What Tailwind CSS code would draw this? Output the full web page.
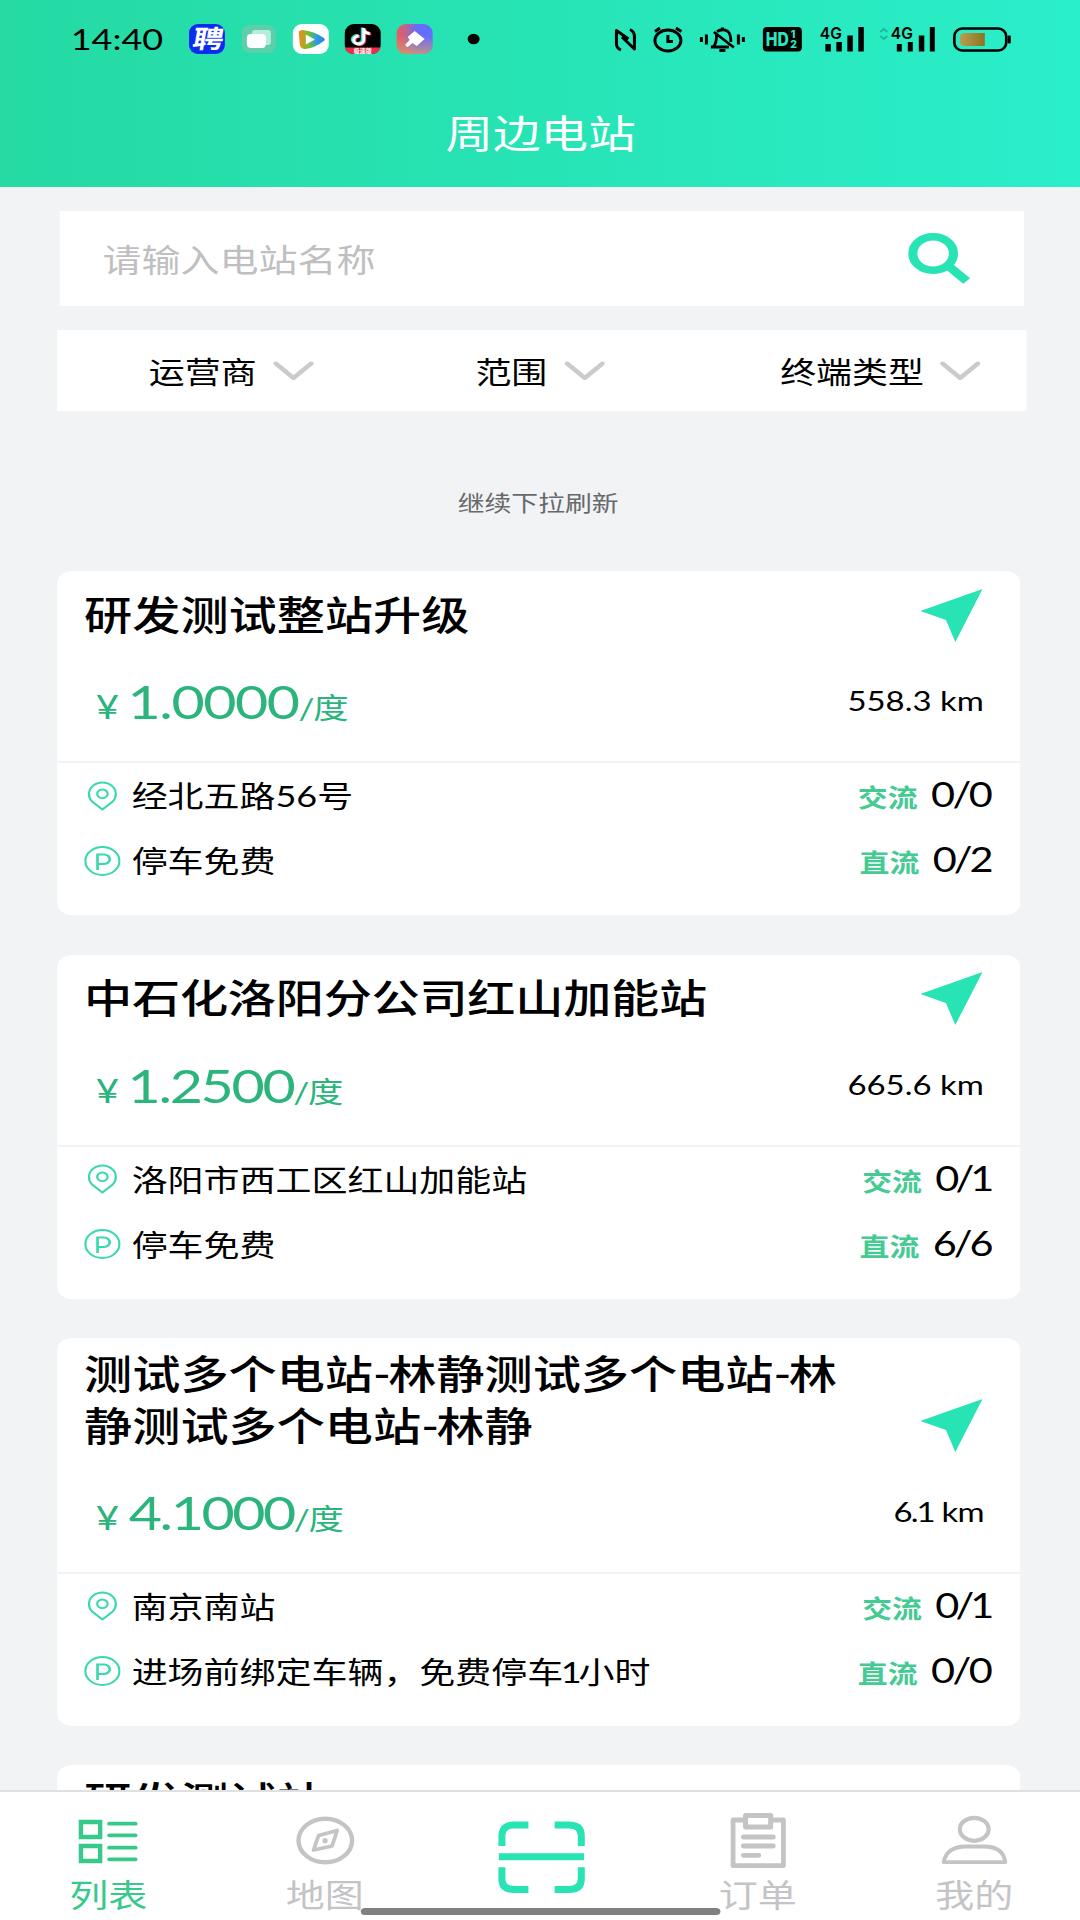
<!DOCTYPE html>
<html lang="zh-CN">
<head>
<meta charset="utf-8">
<title>周边电站</title>
<script src="https://cdn.jsdelivr.net/npm/@tailwindcss/browser@4"></script>
</head>
<body class="w-[1080px] h-[1920px] overflow-hidden bg-[#f1f3f5]">
<svg class="hidden">
  <symbol id="chev" viewBox="0 0 33 20"><path d="M2 2.5 L16.5 17 L31 2.5" fill="none" stroke="#cbcbcb" stroke-width="4" stroke-linecap="round" stroke-linejoin="round"/></symbol>
  <symbol id="nav" viewBox="0 0 51 53"><path d="M51 0 L0 22 L21 31 L28.7 53 Z" fill="#28e3b4"/></symbol>
  <symbol id="pin" viewBox="0 0 30 30"><path d="M15 28.500 L6.500 20.500 A12 12 0 0 1 4 12.700 A11 11.200 0 0 1 26 12.700 A12 12 0 0 1 23.500 20.500 Z" fill="none" stroke="#3ad8af" stroke-width="1.8" stroke-linejoin="round"/><circle cx="15" cy="12.800" r="4.300" fill="none" stroke="#3ad8af" stroke-width="1.8"/></symbol>
  <symbol id="park" viewBox="0 0 30 30"><circle cx="15" cy="15" r="14" fill="none" stroke="#3ad8af" stroke-width="1.8"/><path d="M11 24 V8.500 H16.500 A4.500 4.700 0 0 1 16.500 18 H11" fill="none" stroke="#3ad8af" stroke-width="2.2"/></symbol>
</svg>
<!-- Narrow canvas widened to the full viewport -->
<div class="relative w-[886px] h-[1920px] origin-top-left scale-x-[1.219] flex flex-col overflow-hidden bg-[#f1f3f5] text-black font-['Lato','Noto_Sans_CJK_SC',sans-serif]">

  <header class="h-[187px] shrink-0 bg-linear-to-r from-[#25daa3] via-[#27e4b5] to-[#2aefcb]">
    <div class="h-[78px] flex items-center pl-[58px] pr-[56px]">
      <span class="w-[97px] text-[29.5px] leading-[30px]">14:40</span>
      <svg class="w-[245px] h-[30px]" viewBox="0 0 299 30" preserveAspectRatio="none">
        <defs>
          <linearGradient id="g1" x1="0" y1="0" x2="1" y2="0"><stop offset="0" stop-color="#ee5a5e"/><stop offset=".25" stop-color="#c0648c"/><stop offset=".55" stop-color="#6a6cf5"/><stop offset="1" stop-color="#5f6eff"/></linearGradient>
          <linearGradient id="g2" x1="0" y1="0" x2="0" y2="1"><stop offset=".4" stop-color="#d89a6a" stop-opacity="0"/><stop offset="1" stop-color="#dd9a68"/></linearGradient>
          <linearGradient id="g3" x1="0" y1="0" x2="1" y2="0"><stop offset="0" stop-color="#f58a1e"/><stop offset=".4" stop-color="#6cc12c"/><stop offset=".7" stop-color="#2a9be8"/><stop offset="1" stop-color="#2a7fe0"/></linearGradient>
        </defs>
        <rect x="0" y="0" width="36" height="30" rx="9" fill="#0a2bf0"/>
        <text x="18" y="24" font-size="25" font-weight="700" text-anchor="middle" fill="#fff" transform="translate(4 0) skewX(-10)" textLength="31" lengthAdjust="spacingAndGlyphs">聘</text>
        <rect x="53" y="1" width="34" height="28" rx="8" fill="#5fcfab"/>
        <rect x="63" y="6" width="19" height="15" rx="3" fill="#b4eeda"/>
        <rect x="58" y="10" width="19" height="14" rx="4" fill="#fff"/>
        <rect x="104" y="0" width="36" height="30" rx="9" fill="#fff"/>
        <path d="M110 9 Q110 6 114 6 Q125 7 135 14 Q137 15.500 135 17 Q126 24 116 25 Q112 25 111 21 Z" fill="url(#g3)"/><path d="M117 10.500 L126 15.500 L117 20.500 Z" fill="#fff"/>
        <rect x="156" y="0" width="36" height="30" rx="9" fill="#000"/>
        <path d="M156 23.500 H192 Q190 30 183 30 H165 Q157 30 156 23.500" fill="#e8304c"/>
        <text x="174" y="29" font-size="6" font-weight="700" text-anchor="middle" fill="#fff">极速版</text>
        <g fill="none" stroke-width="3"><path d="M174.500 4 V16 A5 4 0 1 1 170 12 M174.500 5 Q176 9.500 181 9.500" stroke="#29e0dc" transform="translate(-1 -.5)"/><path d="M174.500 4 V16 A5 4 0 1 1 170 12 M174.500 5 Q176 9.500 181 9.500" stroke="#f0365c" transform="translate(1.500 .5)"/><path d="M175 4 V16 A5 4 0 1 1 170 12 M175 5 Q176 9.500 181 9.500" stroke="#fff"/></g>
        <rect x="208" y="0" width="36" height="30" rx="9" fill="url(#g1)"/><rect x="208" y="0" width="36" height="30" rx="9" fill="url(#g2)" opacity=".8"/>
        <path d="M226 7 L236 15 L228 22 L224 19 L219 23 Q216 22 217 20 L221 16 L219 13 Z" fill="#fff"/>
        <ellipse cx="285" cy="15" rx="6" ry="5.200"/>
      </svg>
      <svg class="ml-auto w-[328px] h-[30px]" viewBox="612 24 400 30" preserveAspectRatio="none" font-family="Inter, sans-serif" font-weight="600">
        <g fill="none" stroke="#000" stroke-width="3">
          <path d="M621 50 Q616.500 48 616.500 44 V30.500 L628.500 39 M622 37 L634.500 49 V36.500 Q634.500 31.500 630 29.500" stroke-linejoin="round"/>
          <ellipse cx="668" cy="40.500" rx="13" ry="10.500"/><path d="M668 35 V41.500 H673 M655 31.500 L660 28 M676 28 L681.500 31.500"/>
          <path d="M701.500 37 V42 M706.500 34.500 V44.500 M738.500 34.500 V44.500 M743.500 37 V42"/>
          <path d="M711 47 H729 M713.500 46.500 Q717 43 716.500 35 M714 32 L734 47.500 M717 31.500 Q723 28 728 31.500 Q731 34 731 42" stroke-width="2.800"/><path d="M722.500 27.500 V30 M719.500 50.500 H725.500"/>
          <rect x="954.500" y="28.500" width="52" height="22" rx="8" stroke-width="2.700"/>
        </g>
        <rect x="763" y="27" width="39" height="24.500" rx="4"/>
        <text y="46.500" font-size="19" font-weight="800" fill="#2be7c0"><tspan x="766" textLength="23" lengthAdjust="spacingAndGlyphs">HD</tspan></text>
        <text font-size="10.500" font-weight="800" fill="#2be7c0"><tspan x="791" y="38">1</tspan><tspan x="790.500" y="48.500">2</tspan></text>
        <text x="820" y="39" font-size="16" textLength="22" lengthAdjust="spacingAndGlyphs">4G</text>
        <path d="M825.500 44 h5.500 v7.500 h-5.500z M836.500 42 h5.500 v9.500 h-5.500z M847.500 35.500 h5.500 v16 h-5.500z M858.500 27 h5.500 v24.500 h-5.500z"/>
        <path d="M880.500 32 L884 29 L887.500 32 M880.500 36 L884 39 L887.500 36" fill="none" stroke="#1db894" stroke-width="2"/>
        <text x="891" y="39" font-size="16" textLength="22" lengthAdjust="spacingAndGlyphs">4G</text>
        <path d="M897 44 h5 v7.500 h-5z M908 42 h5 v9.500 h-5z M919 35.500 h5.500 v16 h-5.500z M930 27 h5 v24.500 h-5z"/>
        <linearGradient id="bat"><stop offset="0" stop-color="#b9a04f"/><stop offset="1" stop-color="#8c7424"/></linearGradient>
        <path d="M965 33 H985 V46 H965 Q960 46 960 41 V38 Q960 33 965 33" fill="url(#bat)"/>
        <rect x="1008" y="35.500" width="3" height="8" rx="1"/>
      </svg>
    </div>
    <h1 class="pt-[29.5px] pl-px text-center text-[39px] leading-[50px] text-white">周边电站</h1>
  </header>

  <div class="mt-6 ml-[49px] w-[790.5px] h-[95px] shrink-0 bg-white flex items-center pl-[35px] pr-[44px] justify-between">
    <span class="pt-[2px] text-[32px] text-[#bfbfc1]">请输入电站名称</span>
    <svg class="w-[51px] h-[51px]" viewBox="0 0 51 51"><circle cx="20.500" cy="20.500" r="16.700" fill="none" stroke="#28e3b4" stroke-width="7.500"/><path d="M34 34 L48 48" stroke="#28e3b4" stroke-width="8"/></svg>
  </div>

  <div class="mt-[24px] ml-[46.5px] w-[795px] h-[81px] shrink-0 bg-white flex items-center pl-[75.5px] text-[29.5px]">
    <div class="w-[268px] flex items-center gap-[13.5px]"><span class="pt-[3px]">运营商</span><svg class="w-[33.5px] h-5"><use href="#chev"/></svg></div>
    <div class="w-[250px] flex items-center gap-[13.5px]"><span class="pt-[3px]">范围</span><svg class="w-[33.5px] h-5"><use href="#chev"/></svg></div>
    <div class="flex items-center gap-[12.5px]"><span class="pt-[3px]">终端类型</span><svg class="w-[33.5px] h-5"><use href="#chev"/></svg></div>
  </div>

  <div class="h-[160px] shrink-0 pt-[77px] pr-[3px] text-center text-[22px] leading-[30px] text-[#68696a]">继续下拉刷新</div>

  <main class="flex flex-col gap-[39.5px] pl-[47px] w-[837px] h-[1219px] shrink-0 overflow-hidden">
    <article class="shrink-0 bg-white rounded-[12px] overflow-hidden">
      <div class="h-[87px] flex items-center justify-between pl-[22px] pr-[31.5px]">
        <h2 class="text-[39.5px] leading-[51.7px] font-medium">研发测试整站升级</h2>
        <svg class="mt-px w-[51px] h-[53px]"><use href="#nav"/></svg>
      </div>
      <div class="h-[103px] flex items-baseline justify-between pl-[31.5px] pr-[30px] leading-[86px]">
        <div class="text-[#2bb57c] text-[29px]"><span class="text-[33px]">¥</span><span class="ml-[7px] text-[47px] tracking-[-1.2px]">1.0000</span><span class="tracking-[-1px]">/</span>度</div>
        <span class="self-start text-[27px]">558.3 km</span>
      </div>
      <div class="h-[154px] border-t-2 border-[#f1f2f3] pl-[22px] pr-[24.5px] text-[29.5px]">
        <div class="h-[65px] flex justify-between">
          <div class="flex items-center gap-[9px] leading-[67px]"><svg class="w-[30px] h-[30px]"><use href="#pin"/></svg><span>经北五路56号</span></div>
          <div class="flex items-baseline gap-[11px] leading-[62px]"><span class="text-[24.5px] font-bold text-[#45ca93]">交流</span><span class="text-[34px] tracking-[-2px]">0/0</span></div>
        </div>
        <div class="h-[65px] flex justify-between">
          <div class="flex items-center gap-[9px] leading-[67px]"><svg class="w-[30px] h-[30px]"><use href="#park"/></svg><span>停车免费</span></div>
          <div class="flex items-baseline gap-[11px] leading-[62px]"><span class="text-[24.5px] font-bold text-[#45ca93]">直流</span><span class="text-[34px] tracking-[-2.5px]">0/2</span></div>
        </div>
      </div>
    </article>

    <article class="shrink-0 bg-white rounded-[12px] overflow-hidden">
      <div class="h-[87px] flex items-center justify-between pl-[22px] pr-[31.5px]">
        <h2 class="text-[39.5px] leading-[51.7px] font-medium tracking-[-0.2px]">中石化洛阳分公司红山加能站</h2>
        <svg class="mt-px w-[51px] h-[53px]"><use href="#nav"/></svg>
      </div>
      <div class="h-[103px] flex items-baseline justify-between pl-[31.5px] pr-[30px] leading-[86px]">
        <div class="text-[#2bb57c] text-[29px]"><span class="text-[33px]">¥</span><span class="ml-[7px] text-[47px] tracking-[-1.9px]">1.2500</span><span class="tracking-[-1px]">/</span>度</div>
        <span class="self-start text-[27px]">665.6 km</span>
      </div>
      <div class="h-[154px] border-t-2 border-[#f1f2f3] pl-[22px] pr-[24.5px] text-[29.5px]">
        <div class="h-[65px] flex justify-between">
          <div class="flex items-center gap-[9px] leading-[67px]"><svg class="w-[30px] h-[30px]"><use href="#pin"/></svg><span>洛阳市西工区红山加能站</span></div>
          <div class="flex items-baseline gap-[11px] leading-[62px]"><span class="text-[24.5px] font-bold text-[#45ca93]">交流</span><span class="text-[34px] tracking-[-3.2px]">0/1</span></div>
        </div>
        <div class="h-[65px] flex justify-between">
          <div class="flex items-center gap-[9px] leading-[67px]"><svg class="w-[30px] h-[30px]"><use href="#park"/></svg><span>停车免费</span></div>
          <div class="flex items-baseline gap-[11px] leading-[62px]"><span class="text-[24.5px] font-bold text-[#45ca93]">直流</span><span class="text-[34px] tracking-[-2.5px]">6/6</span></div>
        </div>
      </div>
    </article>

    <article class="shrink-0 bg-white rounded-[12px] overflow-hidden">
      <div class="h-[130.5px] flex justify-between pl-[22px] pr-[31.5px]">
        <h2 class="pt-[10px] text-[39.5px] leading-[51.7px] font-medium">测试多个电站<span class="tracking-[-2.2px]">-</span>林静测试多个电站<span class="tracking-[-2.2px]">-</span>林<br>静测试多个电站<span class="tracking-[-2.2px]">-</span>林静</h2>
        <svg class="self-end mb-[16.5px] w-[51px] h-[53px]"><use href="#nav"/></svg>
      </div>
      <div class="h-[103px] flex items-baseline justify-between pl-[31.5px] pr-[30px] leading-[86px]">
        <div class="text-[#2bb57c] text-[29px]"><span class="text-[33px]">¥</span><span class="ml-[8px] text-[47px] tracking-[-2px]">4.1000</span><span class="tracking-[-1px]">/</span>度</div>
        <span class="self-start text-[27px] tracking-[-0.6px]"><span class="tracking-[-1.6px]">6.1</span> km</span>
      </div>
      <div class="h-[154px] border-t-2 border-[#f1f2f3] pl-[22px] pr-[24.5px] text-[29.5px]">
        <div class="h-[65px] flex justify-between">
          <div class="flex items-center gap-[9px] leading-[67px]"><svg class="w-[30px] h-[30px]"><use href="#pin"/></svg><span>南京南站</span></div>
          <div class="flex items-baseline gap-[11px] leading-[62px]"><span class="text-[24.5px] font-bold text-[#45ca93]">交流</span><span class="text-[34px] tracking-[-3.2px]">0/1</span></div>
        </div>
        <div class="h-[65px] flex justify-between">
          <div class="flex items-center gap-[9px] leading-[67px]"><svg class="w-[30px] h-[30px]"><use href="#park"/></svg><span>进场前绑定车辆，免费停车<span class="-ml-[2px] tracking-[-2.6px]">1</span>小时</span></div>
          <div class="flex items-baseline gap-[11px] leading-[62px]"><span class="text-[24.5px] font-bold text-[#45ca93]">直流</span><span class="text-[34px] tracking-[-2px]">0/0</span></div>
        </div>
      </div>
    </article>

    <article class="h-[387.5px] shrink-0 bg-white rounded-[12px] overflow-hidden">
      <div class="h-[130.5px] pl-[22px]">
        <h2 class="pt-[10px] text-[39.5px] leading-[51.7px] font-medium">研发测试站</h2>
      </div>
    </article>
  </main>

  <nav class="w-[888px] h-[130px] shrink-0 bg-white border-t-2 border-[#dfe0e2] grid grid-cols-5 text-[32px] leading-[40px] text-center text-[#c4c4c6]">
    <a class="pt-[18px] flex flex-col items-center gap-[5px] text-[#36c98a]">
      <svg class="w-[57.4px] h-[60px]" viewBox="0 0 70 60" preserveAspectRatio="none" fill="none" stroke="currentColor"><path d="M7.800 12 H27 V27 H7.800 Z M7.800 36 H27 V51 H7.800 Z" stroke-width="4.400"/><path d="M36 13.700 H62.500 M36 25.300 H62.500 M36 37.700 H62.500 M36 49.300 H62.500" stroke-width="3.800" stroke-linecap="round"/></svg>
      <span>列表</span>
    </a>
    <a class="pt-[18px] flex flex-col items-center gap-[5px]">
      <svg class="w-[57.4px] h-[60px]" viewBox="0 0 70 60" preserveAspectRatio="none" fill="none" stroke="currentColor"><ellipse cx="35.200" cy="30.500" rx="26.800" ry="21.800" stroke-width="4.400"/><path d="M47 20.500 L42 36 L23.500 40 L28.500 25.500 Z" stroke-width="3.800" stroke-linejoin="round"/><circle cx="35" cy="30.700" r="2.600" fill="currentColor" stroke="none"/></svg>
      <span>地图</span>
    </a>
    <a class="pt-[28px] flex flex-col items-center">
      <svg class="w-[73.8px] h-[74px]" viewBox="0 0 90 74" preserveAspectRatio="none" fill="none" stroke="#28e3b4" stroke-width="7"><path d="M32.300 5 H18 Q5.800 5 5.800 15.500 V26 M58.500 5 H73 Q85.200 5 85.200 15.500 V26 M5.800 47.300 V59 Q5.800 69.500 18 69.500 H32.300 M85.200 47.300 V59 Q85.200 69.500 73 69.500 H58.500 M2.700 36.700 H88"/></svg>
    </a>
    <a class="pt-[18px] flex flex-col items-center gap-[5px]">
      <svg class="w-[57.4px] h-[60px]" viewBox="0 0 70 60" preserveAspectRatio="none" fill="none" stroke="currentColor" stroke-linejoin="round"><path d="M22 10 H10.200 V55.700 H60.600 V10 H48" stroke-width="4.800"/><path d="M22.700 5.500 H47.800 V17 H22.700 Z" stroke-width="5"/><path d="M20.500 27 H50.500 M20.500 36 H50.500 M20.500 45.300 H36" stroke-width="4.800" stroke-linecap="round"/></svg>
      <span>订单</span>
    </a>
    <a class="pt-[18px] flex flex-col items-center gap-[5px]">
      <svg class="w-[57.4px] h-[60px]" viewBox="0 0 70 60" preserveAspectRatio="none" fill="none" stroke="currentColor" stroke-width="4.200" stroke-linejoin="round"><ellipse cx="34.400" cy="19.300" rx="14.400" ry="11.500"/><path d="M3.700 52.200 H65.500 Q63.500 36.500 44 36.500 H26 Q7 36.500 3.700 52.200 Z" stroke-width="3.800"/></svg>
      <span>我的</span>
    </a>
  </nav>
  <div class="absolute left-[295.5px] top-[1908px] w-[295px] h-[7px] rounded-full bg-[#808080]"></div>
</div>
</body>
</html>
